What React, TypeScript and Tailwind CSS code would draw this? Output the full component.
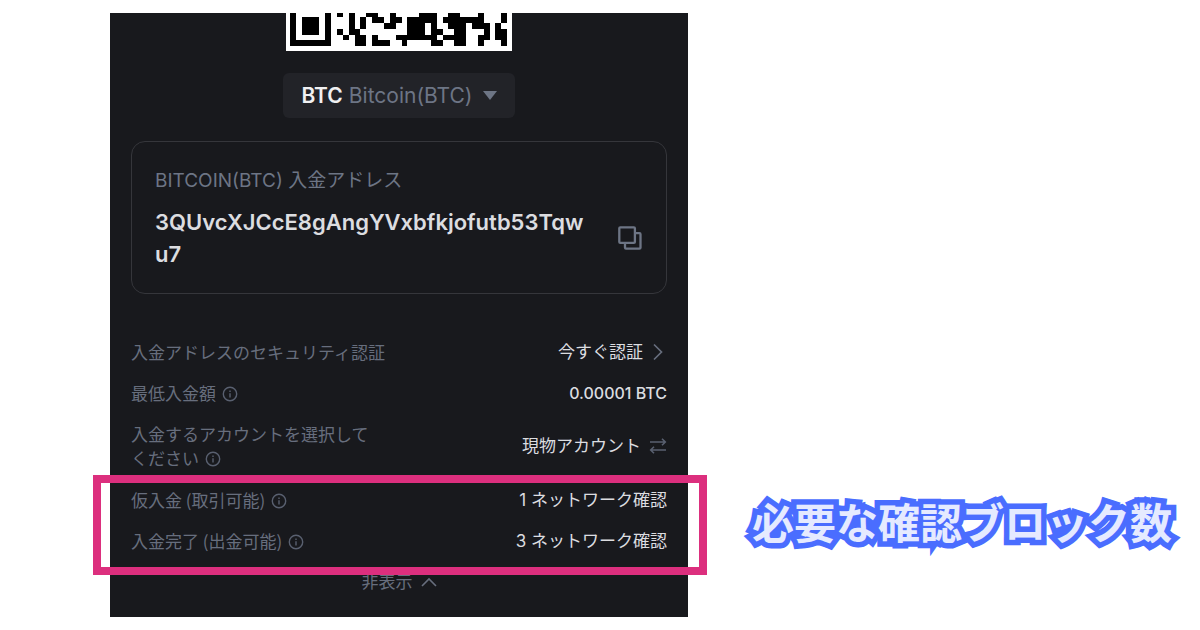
import type { ReactNode } from "react";

const ADDRESS = "3QUvcXJCcE8gAngYVxbfkjofutb53Tqwu7";

// Last rows of the code, "#" is a dark module
const QR_ROWS = [
  "#.....#.#.#..##..#....###..##...#...#",
  "#.###.#...#.#.##.##.#####.#######...#",
  "#.###.#...#.#...##..###.#..###.###.#.",
  "#.###.#.#.##........###.##..##...#.##",
  "#.....#..#.##.#...#######.####..##.##",
  "#######....##.###..#....##..##..#...#",
];

const QrCode = () => (
  <svg
    viewBox="0 0 226 38"
    className="mx-auto block h-[38px] w-[226px]"
    role="img"
    aria-label="QR"
  >
    <rect width="226" height="38" fill="#fff" />
    <g
      fill="#000"
      transform="translate(4 -1.9) scale(5.87)"
      shapeRendering="crispEdges"
    >
      {QR_ROWS.map((row, y) =>
        row
          .split("")
          .map((cell, x) =>
            cell === "#" ? (
              <rect key={`${x}-${y}`} x={x} y={y} width="1" height="1" />
            ) : null
          )
      )}
    </g>
  </svg>
);

const CopyIcon = () => (
  <svg viewBox="0 0 24 24" className="size-6" fill="none" stroke="#6d7585" strokeWidth="2.3">
    <rect x="1.3" y="1.3" width="15.6" height="15.6" rx="1" />
    <path d="M17.5 7.2h4a1 1 0 0 1 1 1v13.5a1 1 0 0 1-1 1h-13.5a1 1 0 0 1-1-1v-4" />
  </svg>
);

const InfoIcon = () => (
  <svg
    viewBox="0 0 16 16"
    className="ml-1.5 inline-block size-4 align-[-2px]"
    fill="none"
    stroke="#596070"
    strokeWidth="1.4"
  >
    <circle cx="8" cy="8" r="6.7" />
    <path d="M8 7.2v4.2M8 4.5v1.4" />
  </svg>
);

const SwapIcon = () => (
  <svg viewBox="0 0 18 18" className="h-[18px] w-[18px]" fill="none" stroke="#596070" strokeWidth="1.6">
    <path d="M1 5h15.5M13 1.8 16.3 5 13 8.2M17 13H1.5M5 9.8 1.7 13 5 16.2" />
  </svg>
);

type RowProps = {
  label: string;
  info?: boolean;
  children: ReactNode;
};

const Row = ({ label, info, children }: RowProps) => (
  <div className="flex items-center justify-between text-[17px] leading-6">
    <dt
      className={`font-['Noto_Sans_CJK_JP',sans-serif] text-[#676e7d] ${
        info ? "max-w-60" : ""
      }`}
    >
      {label}
      {info && <InfoIcon />}
    </dt>
    <dd className="flex items-center text-[#dcdde0]">{children}</dd>
  </div>
);

const App = () => {
  return (
    <main className="flex min-h-screen items-start bg-white py-[13px] pl-[110px] font-[Inter,'Noto_Sans_CJK_JP',sans-serif]">
      <section className="w-full max-w-[578px] shrink-0 bg-[#18191d] px-[21px] pb-[23px]">
        <QrCode />

        <button
          type="button"
          aria-haspopup="listbox"
          className="mx-auto mt-[22px] flex h-[45px] items-center rounded-md bg-[#222328] px-[18px] text-[21px]"
        >
          <span className="font-semibold text-[#f0f0f2]">BTC</span>
          <span className="ml-1.5 text-[#6d7585]">Bitcoin(BTC)</span>
          <svg viewBox="0 0 14 9" className="ml-2.5 h-[9px] w-[14px]" fill="#6d7585">
            <path d="M0 0h14L7 9z" />
          </svg>
        </button>

        <div className="mt-[23px] flex items-center rounded-[14px] border border-[#35363b] pt-6 pr-6 pb-[23px] pl-[23px]">
          <div className="flex-1">
            <h2 className="text-[19px] leading-[30px] text-[#6d7585]">
              BITCOIN(BTC) 入金アドレス
            </h2>
            <p className="mt-2.5 text-[22px] leading-8 font-semibold break-all text-[#dcdde0]">
              {ADDRESS}
            </p>
          </div>
          <button type="button" aria-label="コピー" className="mt-10 ml-8">
            <CopyIcon />
          </button>
        </div>

        <dl className="mt-[46px] flex flex-col gap-[17px]">
          <Row label="入金アドレスのセキュリティ認証">
            <a href="#verify" className="flex items-center gap-2">
              今すぐ認証
              <svg viewBox="0 0 16 18" className="h-[18px] w-4" fill="none" stroke="#676e7d" strokeWidth="1.7">
                <path d="M3 1.5 10.5 9 3 16.5" />
              </svg>
            </a>
          </Row>
          <Row label="最低入金額" info>
            <span className="text-base font-medium">0.00001 BTC</span>
          </Row>
          <Row label="入金するアカウントを選択してください" info>
            <button type="button" className="flex items-center gap-2">
              現物アカウント
              <SwapIcon />
            </button>
          </Row>
        </dl>

        <dl className="relative z-10 mt-[5px] mr-[-40px] ml-[-38px] flex flex-col gap-[17px] border-8 border-[#dc2f7e] pt-[5px] pr-8 pb-[14px] pl-[30px]">
          <Row label="仮入金 (取引可能)" info>
            1 ネットワーク確認
          </Row>
          <Row label="入金完了 (出金可能)" info>
            3 ネットワーク確認
          </Row>
        </dl>

        <button
          type="button"
          className="mx-auto mt-[-5px] flex items-center gap-2 text-[17px] leading-6 text-[#676e7d]"
        >
          非表示
          <svg viewBox="0 0 16 10" className="h-[10px] w-4" fill="none" stroke="#676e7d" strokeWidth="1.6">
            <path d="M1 9 8 2l7 7" />
          </svg>
        </button>
      </section>

      <h1 className="mt-[481px] flex-1 pl-16 text-[42px] leading-[60px] font-bold whitespace-nowrap text-[#e5eaff] [-webkit-text-stroke:11px_#4a6dff] [paint-order:stroke_fill]">
        必要な確認ブロック数
      </h1>
    </main>
  );
};

export default App;
